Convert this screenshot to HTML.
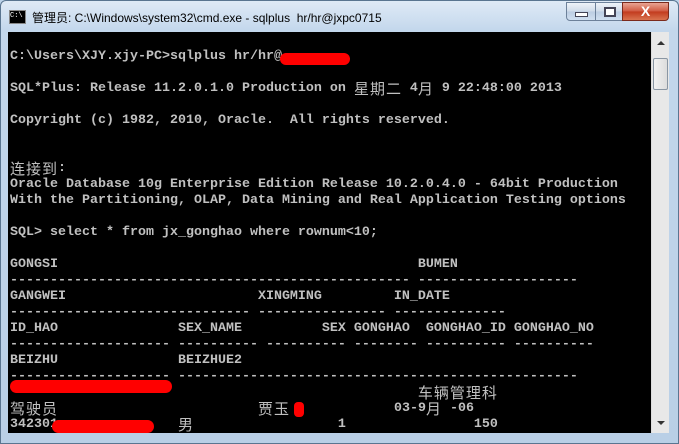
<!DOCTYPE html>
<html><head><meta charset="utf-8"><style>
*{margin:0;padding:0}
body{width:679px;height:444px;overflow:hidden;background:#bcd3ea;position:relative;font-family:"Liberation Sans","Noto Sans CJK SC",sans-serif}
.frame{position:absolute;left:0;top:0;width:677px;height:442px;border:1px solid #5a7590;border-radius:6px 6px 0 0;background:linear-gradient(#dfeaf6 0,#c3d7ec 30px,#b9cfe6 100%)}
.title{position:absolute;left:32px;top:9px;font-size:12px;color:#000}
.icon{position:absolute;left:9px;top:10px;width:15px;height:12px;background:#000;border:1px solid #888;color:#fff;font:7px "Liberation Mono",monospace;line-height:11px}
.btn{position:absolute;top:2px;height:17px;border:1px solid #6d819a;background:linear-gradient(#eef3f9,#cfdbe9 50%,#bccde2 51%,#d0dff0)}
.con{position:absolute;left:8px;top:32px;width:643px;height:401px;background:#000;overflow:hidden}
.sb{position:absolute;left:651px;top:32px;width:17px;height:401px;background:#e8e8e8;border-left:1px solid #ddd}
pre{position:absolute;left:2px;top:17px;font-family:"Liberation Mono","Noto Sans CJK SC",monospace;font-size:13.33px;font-weight:bold;line-height:16px;color:#c0c0c0;white-space:pre}
pre i{font-style:normal;font-weight:normal;display:inline-block;width:16px;font-size:15px;font-family:"Noto Sans CJK SC",sans-serif;line-height:16px;vertical-align:top}
.r{position:absolute;background:#f00;border-radius:8px}
</style></head><body>
<div class="frame"></div>
<div class="icon">C:\</div>
<div class="title">管理员: C:\Windows\system32\cmd.exe - sqlplus &nbsp;hr/hr@jxpc0715</div>
<div class="btn" style="left:566px;width:28px;border-radius:0 0 0 4px"><div style="position:absolute;left:8px;top:9px;width:11px;height:3px;background:#fff;border:1px solid #445"></div></div>
<div class="btn" style="left:595px;width:26px"><div style="position:absolute;left:8px;top:4px;width:8px;height:6px;border:2px solid #445;background:#fff"></div></div>
<div class="btn" style="left:622px;width:45px;border-radius:0 0 4px 0;background:linear-gradient(#e8a493,#d0583f 50%,#c23a1d 51%,#d9734f);border-color:#7b2a1c"><div style="position:absolute;left:0;width:45px;top:0;text-align:center;color:#fff;font:bold 14px 'Liberation Sans',sans-serif;line-height:17px">X</div></div>
<div class="con"><pre>C:\Users\XJY.xjy-PC&gt;sqlplus hr/hr@

SQL*Plus: Release 11.2.0.1.0 Production on <i>星</i><i>期</i><i>二</i> 4<i>月</i> 9 22:48:00 2013

Copyright (c) 1982, 2010, Oracle.  All rights reserved.


<i>连</i><i>接</i><i>到</i>:
Oracle Database 10g Enterprise Edition Release 10.2.0.4.0 - 64bit Production
With the Partitioning, OLAP, Data Mining and Real Application Testing options

SQL&gt; select * from jx_gonghao where rownum&lt;10;

GONGSI                                             BUMEN
-------------------------------------------------- --------------------
GANGWEI                        XINGMING         IN_DATE
------------------------------ ---------------- --------------
ID_HAO               SEX_NAME          SEX GONGHAO  GONGHAO_ID GONGHAO_NO
-------------------- ---------- ---------- -------- ---------- ----------
BEIZHU               BEIZHUE2
-------------------- --------------------------------------------------
                                                   <i>车</i><i>辆</i><i>管</i><i>理</i><i>科</i>
<i>驾</i><i>驶</i><i>员</i>                         <i>贾</i><i>玉</i>             03-9<i>月</i> -06
342301               <i>男</i>                  1                150
</pre>
<div class="r" style="left:272px;top:21px;width:70px;height:12px"></div>
<div class="r" style="left:2px;top:348px;width:162px;height:13px"></div>
<div class="r" style="left:286px;top:370px;width:10px;height:15px;border-radius:4px"></div>
<div class="r" style="left:44px;top:388px;width:102px;height:13px"></div>
</div>
<div class="sb">
<div style="position:absolute;left:5px;top:9px;border:4px solid transparent;border-bottom:4px solid #333;border-top:0"></div>
<div style="position:absolute;left:1px;top:26px;width:13px;height:30px;border:1px solid #8a96a3;border-radius:2px;background:linear-gradient(90deg,#f2f2f2,#dcdcdc)"></div>
<div style="position:absolute;left:5px;top:389px;border:4px solid transparent;border-top:4px solid #333;border-bottom:0"></div>
</div>
</body></html>
